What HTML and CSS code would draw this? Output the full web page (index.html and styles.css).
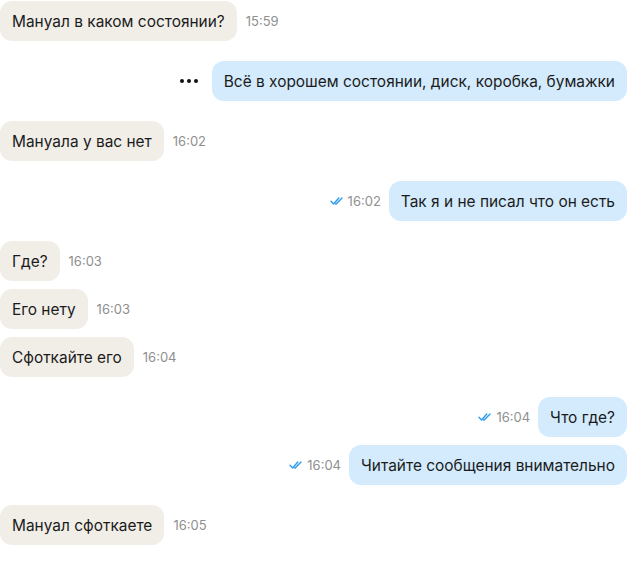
FILE: index.html
```html
<!DOCTYPE html>
<html lang="ru">
<head>
<meta charset="utf-8">
<link rel="stylesheet" href="styles.css">
</head>
<body>
<div class="chat">
  <div class="row in">
    <div class="bubble">Мануал в каком состоянии?</div>
    <span class="time">15:59</span>
  </div>
  <div class="row out group">
    <span class="dots"><i></i><i></i><i></i></span>
    <div class="bubble">Всё в хорошем состоянии, диск, коробка, бумажки</div>
  </div>
  <div class="row in group">
    <div class="bubble">Мануала у вас нет</div>
    <span class="time">16:02</span>
  </div>
  <div class="row out group">
    <span class="time"><svg class="check" viewBox="0 0 14 8" width="14" height="8"><path d="M1 4.3 L3.6 7 L8.8 1 M5.6 7 L6.2 7 L12 1" fill="none" stroke="#2e9cf0" stroke-width="1.4" stroke-linecap="round" stroke-linejoin="round"/></svg>16:02</span>
    <div class="bubble">Так я и не писал что он есть</div>
  </div>
  <div class="row in group">
    <div class="bubble">Где?</div>
    <span class="time">16:03</span>
  </div>
  <div class="row in">
    <div class="bubble">Его нету</div>
    <span class="time">16:03</span>
  </div>
  <div class="row in">
    <div class="bubble">Сфоткайте его</div>
    <span class="time">16:04</span>
  </div>
  <div class="row out group">
    <span class="time"><svg class="check" viewBox="0 0 14 8" width="14" height="8"><path d="M1 4.3 L3.6 7 L8.8 1 M5.6 7 L6.2 7 L12 1" fill="none" stroke="#2e9cf0" stroke-width="1.4" stroke-linecap="round" stroke-linejoin="round"/></svg>16:04</span>
    <div class="bubble">Что где?</div>
  </div>
  <div class="row out">
    <span class="time"><svg class="check" viewBox="0 0 14 8" width="14" height="8"><path d="M1 4.3 L3.6 7 L8.8 1 M5.6 7 L6.2 7 L12 1" fill="none" stroke="#2e9cf0" stroke-width="1.4" stroke-linecap="round" stroke-linejoin="round"/></svg>16:04</span>
    <div class="bubble">Читайте сообщения внимательно</div>
  </div>
  <div class="row in group">
    <div class="bubble">Мануал сфоткаете</div>
    <span class="time">16:05</span>
  </div>
</div>
</body>
</html>
```
FILE: styles.css
```css
html, body {
  margin: 0;
  padding: 0;
  background: #ffffff;
}
.chat {
  display: flex;
  flex-direction: column;
  gap: 8px;
  padding: 1px 4px 0 0;
  font-family: Inter, "Noto Sans", sans-serif;
}
.row {
  display: flex;
  align-items: center;
}
.row.group {
  margin-top: 12px;
}
.row.out {
  justify-content: flex-end;
}
.bubble {
  height: 40px;
  box-sizing: border-box;
  padding: 0 12px;
  display: flex;
  align-items: center;
  border-radius: 12px;
  font-size: 15.45px;
  color: #1b1b1b;
  white-space: nowrap;
}
.in .bubble {
  background: #f1eee8;
}
.out .bubble {
  background: #d3ebfd;
}
.time {
  display: flex;
  align-items: center;
  gap: 4px;
  font-size: 13px;
  color: #8f8f8f;
}
.in .time {
  margin-left: 9px;
}
.out .time {
  margin-right: 8px;
}
.dots {
  display: flex;
  gap: 3px;
  margin-right: 14px;
}
.dots i {
  width: 4px;
  height: 4px;
  border-radius: 50%;
  background: #111;
}
```
